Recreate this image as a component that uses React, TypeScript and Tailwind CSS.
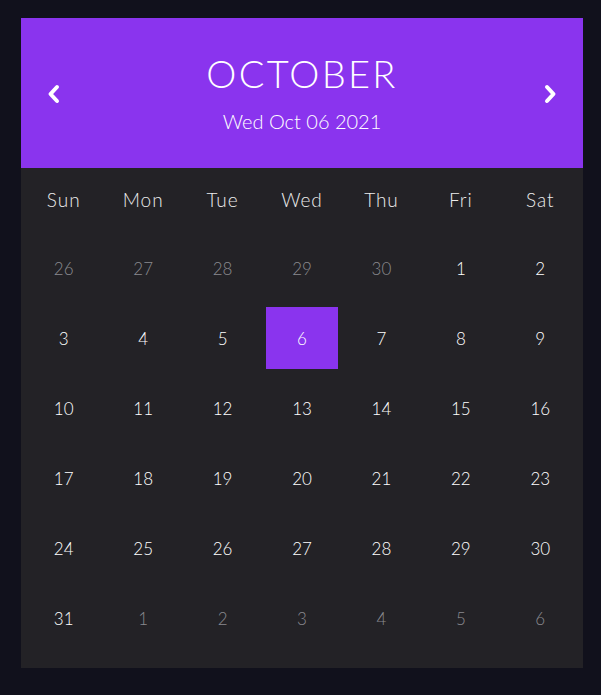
import React from 'react';

const weekdays = ['Sun', 'Mon', 'Tue', 'Wed', 'Thu', 'Fri', 'Sat'];

type Day = { n: number; muted?: boolean; selected?: boolean };

function buildDays(): Day[] {
    const days: Day[] = [];
    for (let n = 26; n <= 30; n++) days.push({ n, muted: true });
    for (let n = 1; n <= 31; n++) days.push({ n, selected: n === 6 });
    for (let n = 1; n <= 6; n++) days.push({ n, muted: true });
    return days;
}

function Chevron({ dir }: { dir: 'left' | 'right' }) {
    return (
        <svg width="16" height="20" viewBox="0 0 16 20" fill="none">
            <path
                d={dir === 'left' ? 'M11 3 L4.5 10 L11 17' : 'M5 3 L11.5 10 L5 17'}
                stroke="white"
                strokeWidth="4"
                strokeLinecap="round"
                strokeLinejoin="round"
            />
        </svg>
    );
}

export default function App() {
    const days = buildDays();
    return (
        <div className="min-h-screen bg-[#11111c] pt-[18px] pl-[21px]" style={{ fontFamily: 'Lato, "Noto Sans", sans-serif' }}>
            <div className="w-[562px] bg-[#232226] pb-[15px]">
                <div className="h-[150px] bg-[#8a34ee] flex items-center justify-between px-[23px] text-white">
                    <button className="w-[20px] h-[20px] flex items-center justify-center mt-[2px]"><Chevron dir="left" /></button>
                    <div className="flex flex-col items-center">
                        <h1 className="text-[38px] font-light tracking-[0.06em] leading-none mt-[-2px]">OCTOBER</h1>
                        <p className="text-[20px] font-light mt-[19px] leading-none">Wed Oct 06 2021</p>
                    </div>
                    <button className="w-[20px] h-[20px] flex items-center justify-center mt-[2px]"><Chevron dir="right" /></button>
                </div>
                <div className="grid grid-cols-7 h-[65px] px-[3px] items-center text-[19px] font-light text-[#ececec] tracking-[0.05em]">
                    {weekdays.map((w) => (
                        <div key={w} className="text-center">{w}</div>
                    ))}
                </div>
                <div className="grid grid-cols-7 px-[3px]">
                    {days.map((d, i) => (
                        <div key={i} className="h-[70px] p-[4px]">
                            <div
                                className={`h-full flex items-center justify-center pt-[2px] text-[17px] font-light ${
                                    d.selected ? 'bg-[#8a34ee] text-white' : d.muted ? 'text-[#8a8a8f]' : 'text-white'
                                }`}
                            >
                                {d.n}
                            </div>
                        </div>
                    ))}
                </div>
            </div>
        </div>
    );
}
